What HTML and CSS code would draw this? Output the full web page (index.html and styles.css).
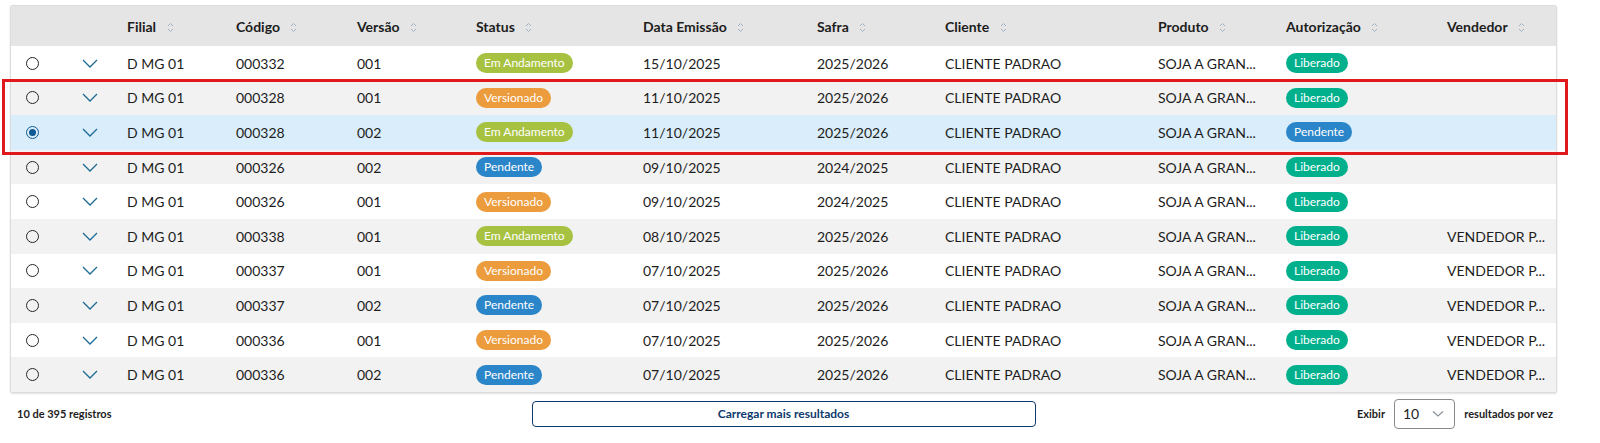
FILE: index.html
```html
<!DOCTYPE html>
<html lang="pt-BR">
<head>
    <meta charset="UTF-8">
    <title>Contratos</title>
    <link rel="stylesheet" href="styles.css">
</head>
<body>
    <div class="page">
        <div class="table-wrap">
            <table class="grid">
                <colgroup>
                    <col style="width:50px"><col style="width:58px"><col style="width:109px"><col style="width:121px">
                    <col style="width:119px"><col style="width:167px"><col style="width:174px"><col style="width:128px">
                    <col style="width:213px"><col style="width:128px"><col style="width:161px"><col>
                </colgroup>
                <thead>
                    <tr>
                        <th></th>
                        <th></th>
                        <th>Filial <span class="sort"></span></th>
                        <th>Código <span class="sort"></span></th>
                        <th>Versão <span class="sort"></span></th>
                        <th>Status <span class="sort"></span></th>
                        <th>Data Emissão <span class="sort"></span></th>
                        <th>Safra <span class="sort"></span></th>
                        <th>Cliente <span class="sort"></span></th>
                        <th>Produto <span class="sort"></span></th>
                        <th>Autorização <span class="sort"></span></th>
                        <th>Vendedor <span class="sort"></span></th>
                    </tr>
                </thead>
                <tbody id="rows"></tbody>
            </table>
        </div>

        <div class="footer">
            <div class="count">10 de 395 registros</div>
            <button class="load-more">Carregar mais resultados</button>
            <div class="page-size">
                <span>Exibir</span>
                <div class="size-select">
                    <span>10</span>
                    <svg width="12" height="8" viewBox="0 0 12 8"><path d="M1 1.5 L6 6 L11 1.5" fill="none" stroke="#8a9099" stroke-width="1.2"/></svg>
                </div>
                <span>resultados por vez</span>
            </div>
        </div>

        <div class="highlight"></div>
    </div>

    <script src="app.js"></script>
</body>
</html>
```

FILE: app.js
```js
const data = [
    ['000332', '001', 'andamento', '15/10/2025', '2025/2026', 'liberado', ''],
    ['000328', '001', 'versionado', '11/10/2025', '2025/2026', 'liberado', ''],
    ['000328', '002', 'andamento', '11/10/2025', '2025/2026', 'pendente', '', true],
    ['000326', '002', 'pendente', '09/10/2025', '2024/2025', 'liberado', ''],
    ['000326', '001', 'versionado', '09/10/2025', '2024/2025', 'liberado', ''],
    ['000338', '001', 'andamento', '08/10/2025', '2025/2026', 'liberado', 'VENDEDOR P...'],
    ['000337', '001', 'versionado', '07/10/2025', '2025/2026', 'liberado', 'VENDEDOR P...'],
    ['000337', '002', 'pendente', '07/10/2025', '2025/2026', 'liberado', 'VENDEDOR P...'],
    ['000336', '001', 'versionado', '07/10/2025', '2025/2026', 'liberado', 'VENDEDOR P...'],
    ['000336', '002', 'pendente', '07/10/2025', '2025/2026', 'liberado', 'VENDEDOR P...']
];

const labels = {
    andamento: 'Em Andamento',
    versionado: 'Versionado',
    pendente: 'Pendente',
    liberado: 'Liberado'
};

const sortIcon = '<svg width="7" height="11" viewBox="0 0 7 11"><path d="M1 4 L3.5 1.5 L6 4 M1 7 L3.5 9.5 L6 7" fill="none" stroke="#9fb0c2" stroke-width="1"/></svg>';
const chevron = '<svg width="16" height="9" viewBox="0 0 16 9"><path d="M1 1 L8 8 L15 1" fill="none" stroke="#1c6a97" stroke-width="1.3"/></svg>';

const tbody = document.getElementById('rows');
data.forEach(row => {
    const [code, version, status, date, safra, auth, seller, selected] = row;
    const tr = document.createElement('tr');
    if (selected) tr.className = 'selected';
    tr.innerHTML = `
        <td><span class="radio${selected ? ' checked' : ''}"></span></td>
        <td class="expand">${chevron}</td>
        <td>D MG 01</td>
        <td>${code}</td>
        <td>${version}</td>
        <td><span class="tag ${status}">${labels[status]}</span></td>
        <td>${date}</td>
        <td>${safra}</td>
        <td>CLIENTE PADRAO</td>
        <td>SOJA A GRAN...</td>
        <td><span class="tag ${auth}">${labels[auth]}</span></td>
        <td>${seller}</td>
    `;
    tbody.appendChild(tr);
});

document.querySelectorAll('.sort').forEach(s => s.innerHTML = sortIcon);
```

FILE: styles.css
```css
body {
    margin: 0;
    font-family: 'Lato', 'Noto Sans', sans-serif;
    color: #1d1d1d;
    background: #fff;
}

.page {
    position: relative;
    padding: 5px 43px 0 10px;
}

.table-wrap {
    border: 1px solid #dcdcdc;
    border-radius: 2px;
    box-shadow: 0 1px 2px rgba(0,0,0,0.12);
    overflow: hidden;
}

.grid {
    width: 100%;
    border-collapse: collapse;
    table-layout: fixed;
    font-size: 14px;
}

.grid th {
    height: 40px;
    background: #e5e5e5;
    text-align: left;
    font-weight: 700;
    padding: 0 8px;
    white-space: nowrap;
}

.sort {
    display: inline-block;
    margin-left: 7px;
    vertical-align: -1px;
}

.sort svg {
    display: block;
}

.grid td {
    height: 34.6px;
    padding: 0 8px;
    white-space: nowrap;
    overflow: hidden;
}

.grid tbody tr:nth-child(even) td {
    background: #f2f2f2;
}

.grid tbody tr.selected td {
    background: #d9eefa;
}

.grid td:first-child {
    padding-left: 15px;
}

.grid td.expand {
    padding-left: 21px;
}

.expand svg {
    display: block;
}

.radio {
    display: block;
    width: 11px;
    height: 11px;
    border: 1.5px solid #262626;
    border-radius: 50%;
    box-sizing: content-box;
    position: relative;
}

.radio.checked {
    border-color: #0f5a92;
}

.radio.checked::after {
    content: '';
    position: absolute;
    left: 2px;
    top: 2px;
    width: 7px;
    height: 7px;
    border-radius: 50%;
    background: #0f5a92;
}

.tag {
    display: inline-block;
    height: 20px;
    line-height: 20px;
    padding: 0 8px;
    border-radius: 10px;
    color: #fff;
    font-size: 12px;
}

.tag.andamento { background: #a7c240; }
.tag.versionado { background: #ec9b3d; }
.tag.pendente { background: #2a85c9; }
.tag.liberado { background: #00b08d; }

.footer {
    display: grid;
    grid-template-columns: 1fr 504px 1fr;
    align-items: center;
    height: 40px;
    margin-top: 1px;
    font-size: 11px;
    font-weight: 700;
}

.count {
    padding-left: 7px;
}

.load-more {
    height: 26px;
    border: 1.5px solid #0d3a6e;
    border-radius: 4px;
    background: #fff;
    color: #0d3a6e;
    font-family: inherit;
    font-size: 12px;
    font-weight: 700;
    cursor: pointer;
}

.page-size {
    display: flex;
    justify-content: flex-end;
    align-items: center;
    gap: 9px;
    padding-right: 4px;
}

.size-select {
    display: flex;
    align-items: center;
    gap: 13px;
    height: 28px;
    padding: 0 10px 0 8px;
    border: 1px solid #8a8a8a;
    border-radius: 4px;
    font-size: 14px;
    font-weight: 400;
}

.highlight {
    position: absolute;
    left: 2px;
    top: 79px;
    width: 1560px;
    height: 70px;
    border: 3px solid #e0191c;
    pointer-events: none;
}
```
